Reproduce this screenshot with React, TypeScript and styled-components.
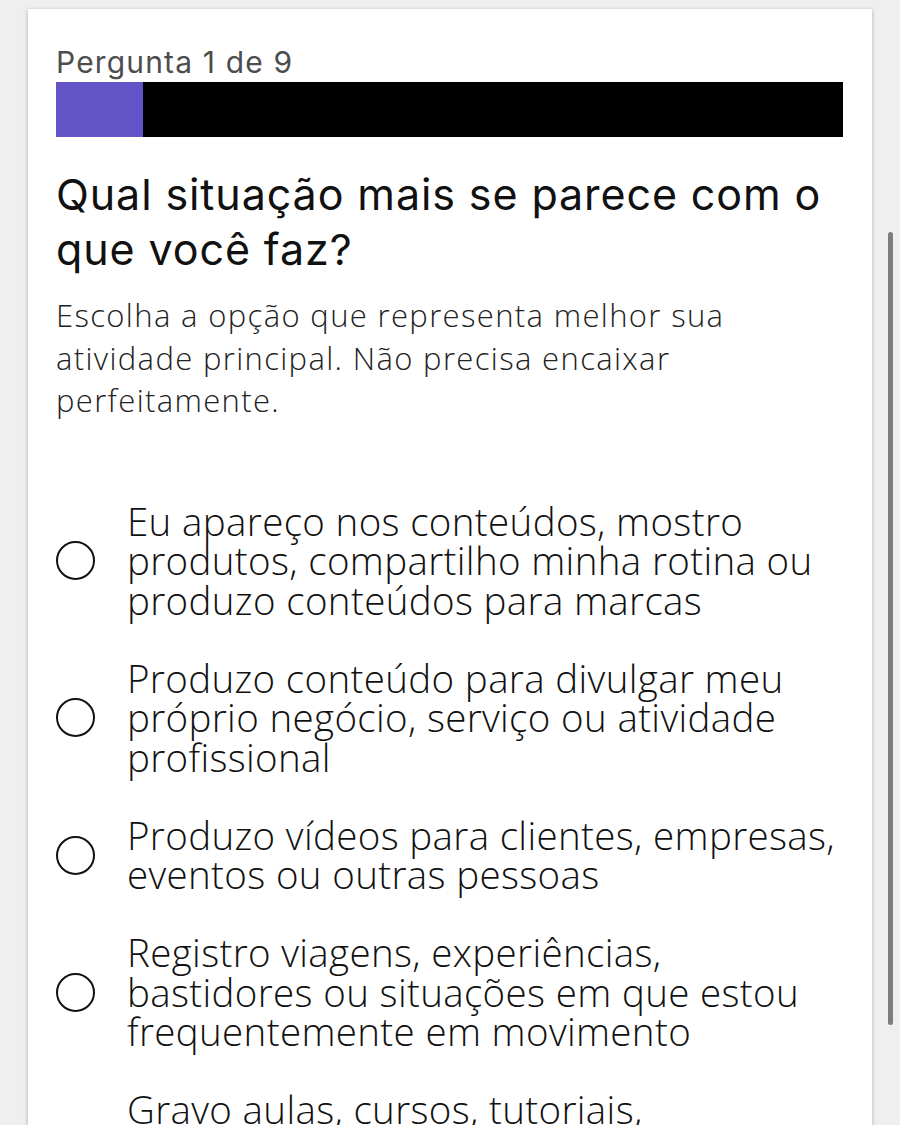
import styled, { createGlobalStyle } from "styled-components";

const options = [
  "Eu apareço nos conteúdos, mostro produtos, compartilho minha rotina ou produzo conteúdos para marcas",
  "Produzo conteúdo para divulgar meu próprio negócio, serviço ou atividade profissional",
  "Produzo vídeos para clientes, empresas, eventos ou outras pessoas",
  "Registro viagens, experiências, bastidores ou situações em que estou frequentemente em movimento",
  "Gravo aulas, cursos, tutoriais, explicações ou conteúdos educativos sobre algum assunto",
];

const current = 1;
const total = 9;

export default function App() {
  return (
    <>
      <GlobalStyle />
      <Page>
        <Card>
          <Counter>
            Pergunta {current} de {total}
          </Counter>
          <Progress>
            <ProgressFill style={{ width: `${(current / total) * 100}%` }} />
          </Progress>
          <Title>Qual situação mais se parece com o que você faz?</Title>
          <Description>
            Escolha a opção que representa melhor sua atividade principal. Não
            precisa encaixar perfeitamente.
          </Description>
          <OptionList>
            {options.map((text) => (
              <Option key={text}>
                <Radio />
                <OptionText>{text}</OptionText>
              </Option>
            ))}
          </OptionList>
        </Card>
      </Page>
      <ScrollThumb />
    </>
  );
}

const GlobalStyle = createGlobalStyle`
  html, body {
    margin: 0;
    padding: 0;
    height: 1125px;
    overflow: hidden;
    background: #efefef;
  }
  * {
    box-sizing: border-box;
  }
`;

const Page = styled.div`
  padding: 9px 28px 0 28px;
`;

const Card = styled.div`
  background: #fff;
  box-shadow: 0 1px 4px rgba(0, 0, 0, 0.28);
  padding: 37px 29px 60px 28px;
  min-height: 1200px;
`;

const Counter = styled.div`
  font-family: Inter, "Liberation Sans", sans-serif;
  font-size: 30px;
  line-height: 32px;
  color: #4d4d4d;
  letter-spacing: 1.15px;
`;

const Progress = styled.div`
  margin-top: 4px;
  height: 55px;
  background: #000;
`;

const ProgressFill = styled.div`
  height: 100%;
  background: #6253c6;
`;

const Title = styled.h1`
  margin: 30px 0 0;
  font-family: Inter, "Liberation Sans", sans-serif;
  font-weight: 400;
  font-size: 43px;
  line-height: 55px;
  color: #111;
  letter-spacing: 0.9px;
`;

const Description = styled.p`
  margin: 17px 0 0;
  font-family: "Open Sans", sans-serif;
  font-weight: 300;
  font-size: 31px;
  line-height: 42.5px;
  color: #222;
  letter-spacing: 1.35px;
`;

const OptionList = styled.div`
  margin-top: 80px;
  display: flex;
  flex-direction: column;
  gap: 38.5px;
`;

const Option = styled.label`
  display: flex;
  align-items: center;
  gap: 32px;
  cursor: pointer;
`;

const Radio = styled.span`
  flex: none;
  width: 39px;
  height: 39px;
  border: 2.5px solid #111;
  border-radius: 50%;
`;

const OptionText = styled.span`
  font-family: "Open Sans", sans-serif;
  font-weight: 300;
  font-size: 38.5px;
  line-height: 39.5px;
  color: #111;
  letter-spacing: 0.35px;
`;

const ScrollThumb = styled.div`
  position: fixed;
  right: 7px;
  top: 232px;
  width: 5px;
  height: 793px;
  border-radius: 3px;
  background: #7e7e7e;
`;
